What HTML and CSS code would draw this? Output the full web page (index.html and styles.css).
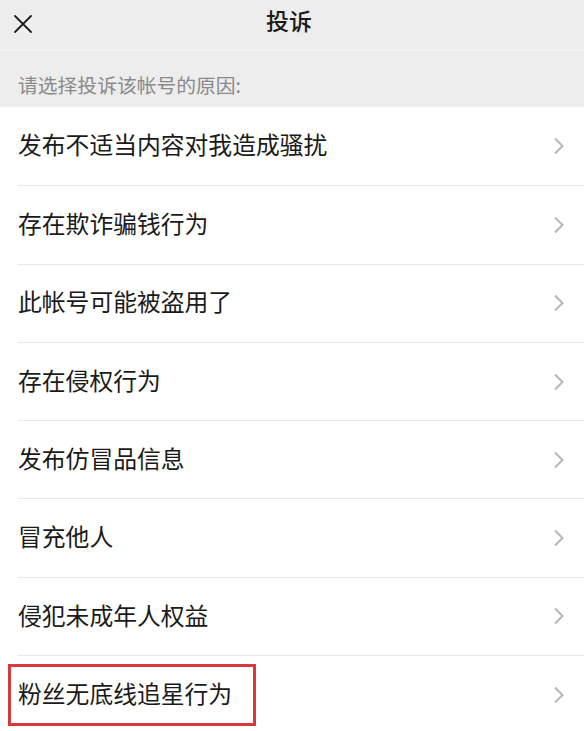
FILE: index.html
```html
<!DOCTYPE html>
<html lang="zh-CN">
  <head>
    <meta charset="UTF-8" />
    <meta name="viewport" content="width=device-width, initial-scale=1.0" />
    <title>投诉</title>
    <link rel="stylesheet" href="styles.css">
  </head>
  <body>
    <div class="wrapper">
      <header class="topbar">
        <a href="" class="close">
          <svg width="22" height="22" viewBox="0 0 22 22">
            <path d="M3 3 L19 19 M19 3 L3 19" stroke="#1c1c1c" stroke-width="1.8" fill="none" stroke-linecap="round" />
          </svg>
        </a>
        <h1 class="title">投诉</h1>
        <span></span>
      </header>
      <main>
        <p class="hint">请选择投诉该帐号的原因:</p>
        <ul class="reasons">
          <li><a href=""><span class="label">发布不适当内容对我造成骚扰</span><svg class="arrow" width="12" height="18" viewBox="0 0 12 18"><path d="M2 1.5 L9.5 9 L2 16.5" /></svg></a></li>
          <li><a href=""><span class="label">存在欺诈骗钱行为</span><svg class="arrow" width="12" height="18" viewBox="0 0 12 18"><path d="M2 1.5 L9.5 9 L2 16.5" /></svg></a></li>
          <li><a href=""><span class="label">此帐号可能被盗用了</span><svg class="arrow" width="12" height="18" viewBox="0 0 12 18"><path d="M2 1.5 L9.5 9 L2 16.5" /></svg></a></li>
          <li><a href=""><span class="label">存在侵权行为</span><svg class="arrow" width="12" height="18" viewBox="0 0 12 18"><path d="M2 1.5 L9.5 9 L2 16.5" /></svg></a></li>
          <li><a href=""><span class="label">发布仿冒品信息</span><svg class="arrow" width="12" height="18" viewBox="0 0 12 18"><path d="M2 1.5 L9.5 9 L2 16.5" /></svg></a></li>
          <li><a href=""><span class="label">冒充他人</span><svg class="arrow" width="12" height="18" viewBox="0 0 12 18"><path d="M2 1.5 L9.5 9 L2 16.5" /></svg></a></li>
          <li><a href=""><span class="label">侵犯未成年人权益</span><svg class="arrow" width="12" height="18" viewBox="0 0 12 18"><path d="M2 1.5 L9.5 9 L2 16.5" /></svg></a></li>
          <!-- 표시된 항목 -->
          <li><a href=""><span class="label marked">粉丝无底线追星行为</span><svg class="arrow" width="12" height="18" viewBox="0 0 12 18"><path d="M2 1.5 L9.5 9 L2 16.5" /></svg></a></li>
        </ul>
      </main>
    </div>
  </body>
</html>
```

FILE: styles.css
```css
* {
  box-sizing: border-box;
}
ul {
  list-style: none;
  margin: 0;
  padding: 0;
}
a {
  text-decoration: none;
  color: inherit;
}
body {
  margin: 0;
  font-family: "Noto Sans CJK SC", "Noto Sans", sans-serif;
  color: #1a1a1a;
  background-color: #fff;
}

.wrapper {
  height: 100vh;
  overflow: hidden;
}
.wrapper > .topbar {
  height: 51px;
  display: grid;
  grid-template-columns: 1fr auto 1fr;
  align-items: center;
  background-color: #ededed;
  border-bottom: 1px solid #f4f4f4;
}
.wrapper > .topbar > .close {
  display: flex;
  padding-left: 12px;
  padding-bottom: 3px;
}
.wrapper > .topbar > .title {
  margin: 0;
  font-size: 23px;
  font-weight: 500;
  line-height: 1;
  padding-bottom: 9px;
  padding-right: 6px;
}
.wrapper > main > .hint {
  margin: 0;
  height: 56px;
  padding: 21px 0 0 18px;
  font-size: 19.8px;
  line-height: 26px;
  color: #8a8a8a;
  background-color: #ededed;
}
.wrapper > main > ul.reasons > li {
  padding-left: 18px;
  background-color: #fff;
}
.wrapper > main > ul.reasons > li > a {
  height: 78.3px;
  display: flex;
  align-items: center;
  justify-content: space-between;
  padding-right: 19px;
  padding-bottom: 3px;
  border-top: 1px solid #e8e8e8;
}
.wrapper > main > ul.reasons > li:first-child > a {
  border-top: none;
}
.wrapper > main > ul.reasons .label {
  font-size: 23.8px;
  line-height: 1.2;
}
.wrapper > main > ul.reasons .label.marked {
  display: inline-flex;
  align-items: center;
  height: 62px;
  margin-left: -10px;
  padding: 0 21px 2px 7px;
  border: 3px solid #d9383f;
  margin-top: 3px;
}
.wrapper > main > ul.reasons .arrow {
  fill: none;
  stroke: #b6b6b6;
  stroke-width: 2;
  margin-top: 3px;
}
```
